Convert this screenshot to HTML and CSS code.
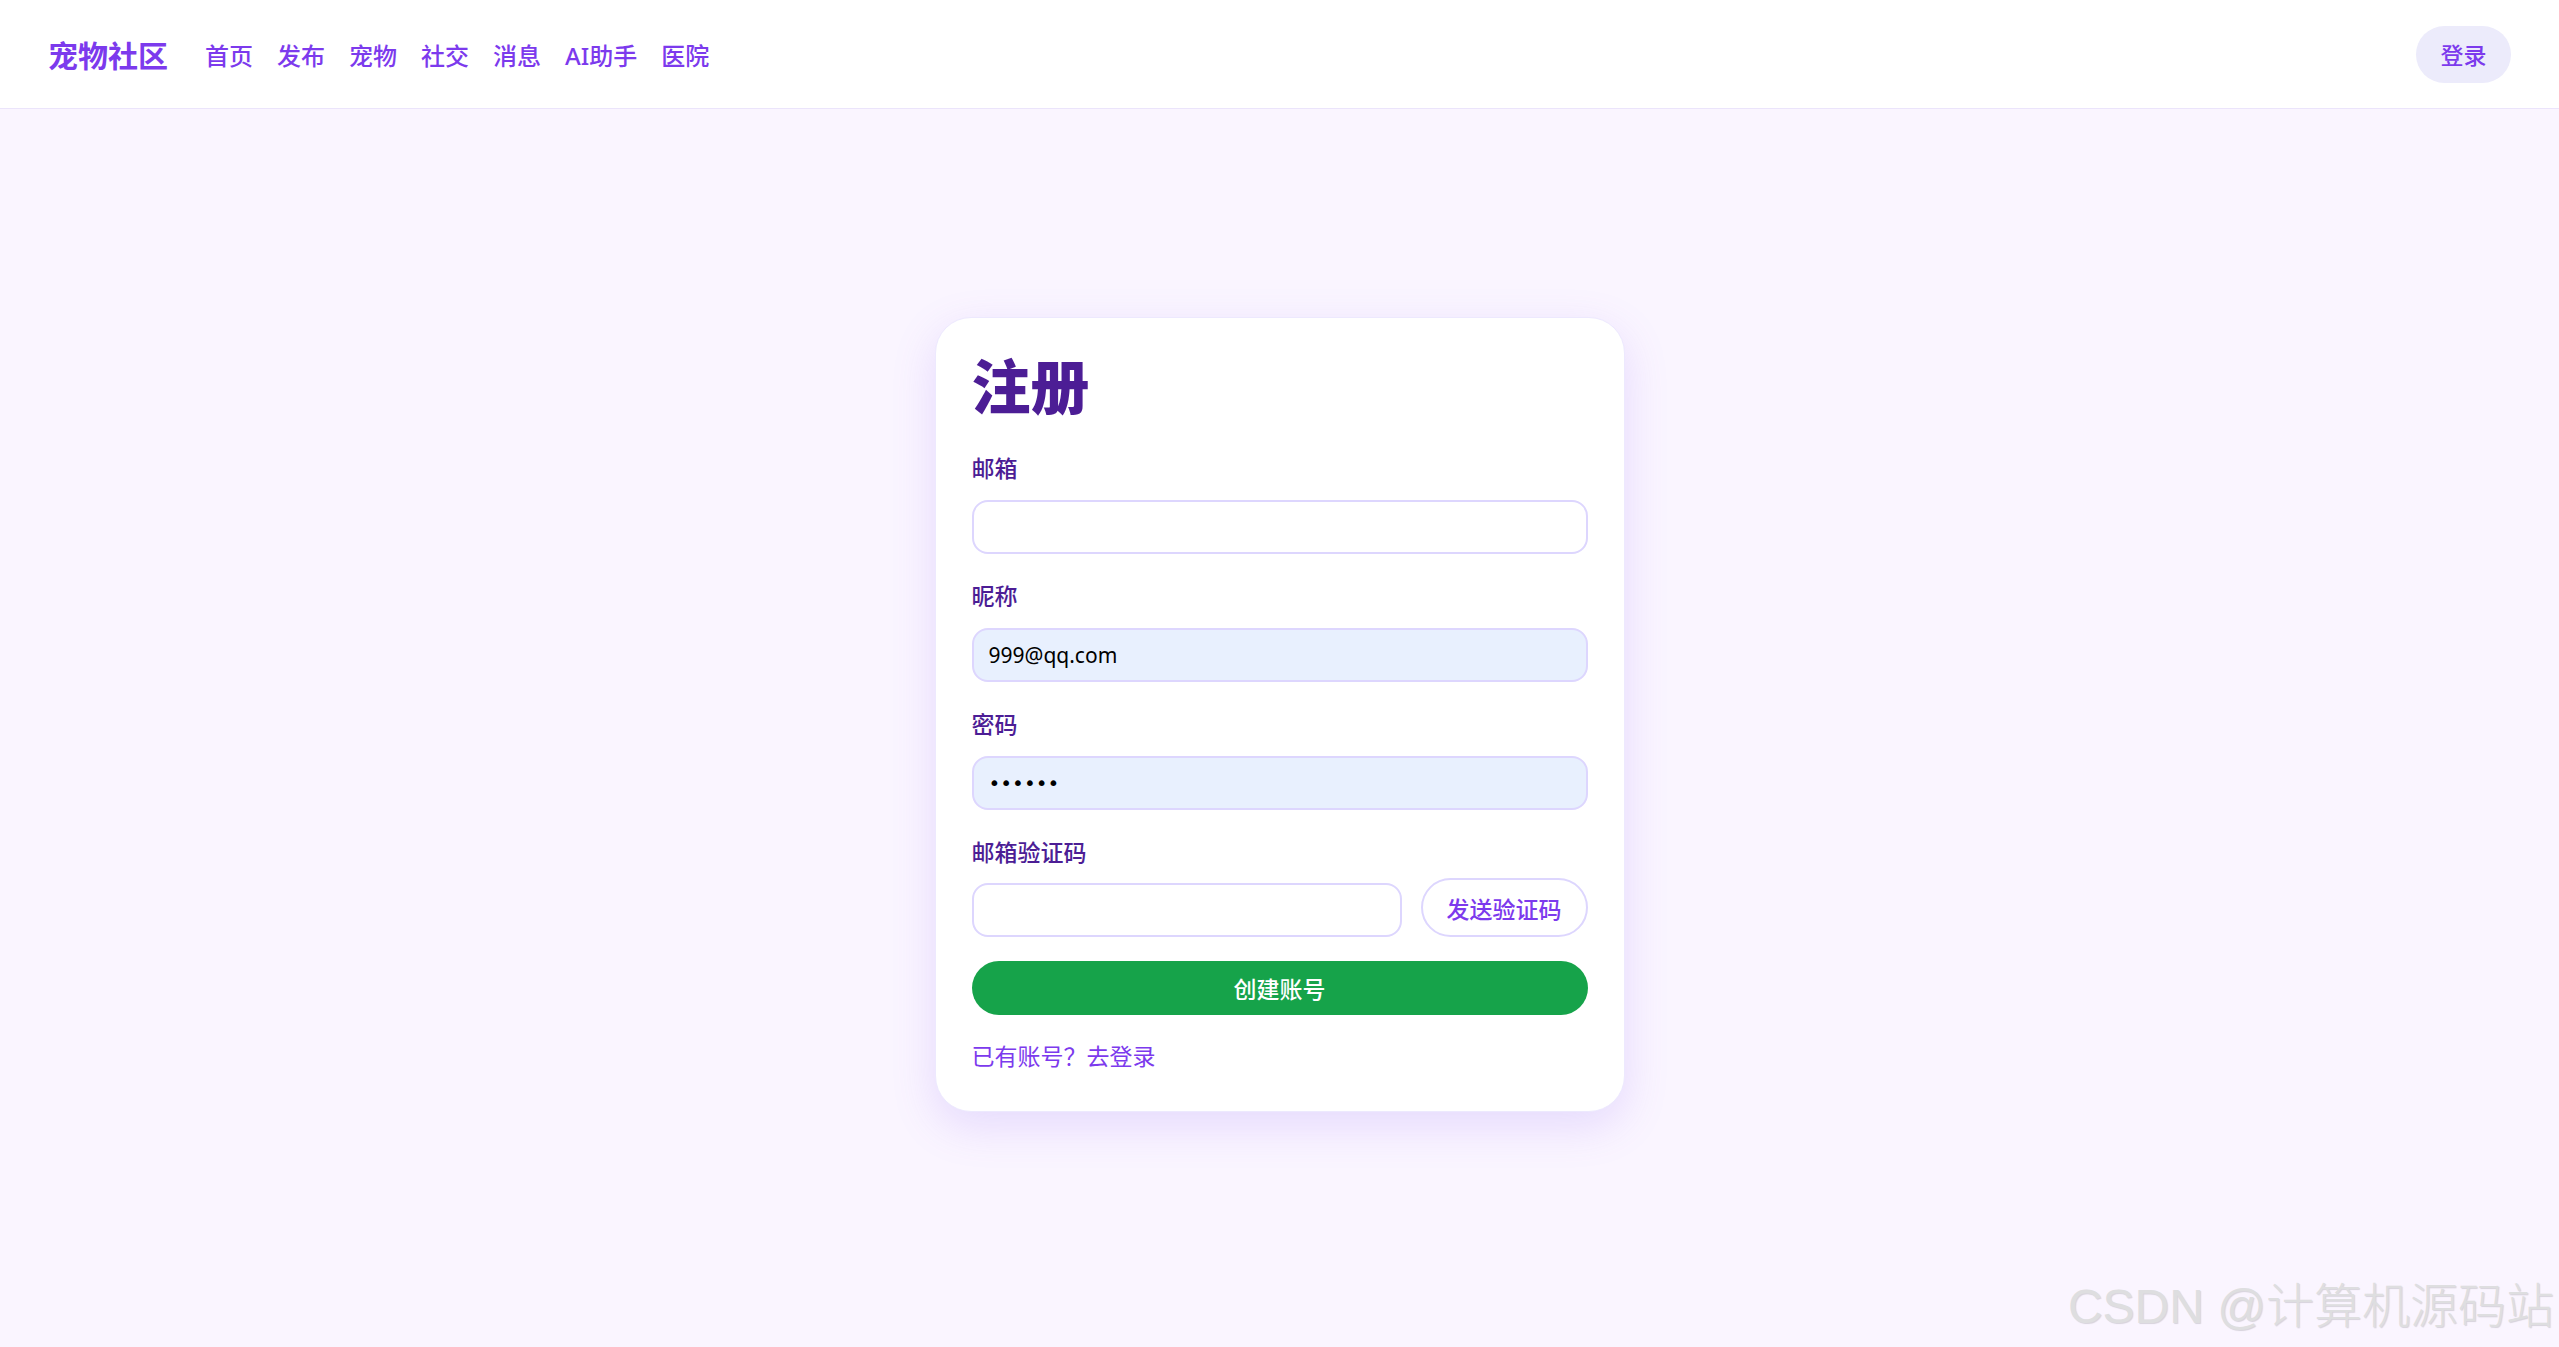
FILE: index.html
```html
<!DOCTYPE html>
<html lang="zh-CN">
<head>
    <meta charset="UTF-8">
    <meta name="viewport" content="width=device-width, initial-scale=1.0">
    <title>宠物社区 - 注册</title>
    <link rel="stylesheet" href="styles.css">
</head>
<body>
    <header class="topbar">
        <div class="topbar_left">
            <a class="logo" href="#">宠物社区</a>
            <nav class="nav">
                <a href="#">首页</a>
                <a href="#">发布</a>
                <a href="#">宠物</a>
                <a href="#">社交</a>
                <a href="#">消息</a>
                <a href="#">AI助手</a>
                <a href="#">医院</a>
            </nav>
        </div>
        <button class="login_btn">登录</button>
    </header>

    <main class="page">
        <form class="card" onsubmit="return false">
            <h1>注册</h1>

            <div class="field">
                <label>邮箱</label>
                <input class="input" type="text">
            </div>
            <div class="field">
                <label>昵称</label>
                <input class="input filled" type="text" value="999@qq.com">
            </div>
            <div class="field">
                <label>密码</label>
                <input class="input filled pwd" type="password" value="123456">
            </div>
            <div class="field code_field">
                <label>邮箱验证码</label>
                <div class="code_row">
                    <input class="input" type="text">
                    <button class="send_btn" type="button">发送验证码</button>
                </div>
            </div>

            <button class="submit_btn" type="submit">创建账号</button>
            <a class="switch_link" href="#">已有账号？去登录</a>
        </form>
    </main>

    <div class="watermark">CSDN @计算机源码站</div>
</body>
</html>
```

FILE: styles.css
```css
body{
    margin: 0;
    min-height: 100vh;
    background-color: #faf5ff;
    font-family: "Noto Sans", "Noto Sans CJK SC", sans-serif;
    position: relative;
}
a{
    text-decoration: none;
}

/* top bar */
.topbar{
    display: flex;
    align-items: center;
    justify-content: space-between;
    height: 108px;
    padding: 0 48px;
    background-color: #fff;
    border-bottom: 1px solid #ebe4fb;
}
.topbar_left{
    display: flex;
    align-items: center;
}
.logo{
    font-size: 30px;
    font-weight: 700;
    color: #7c3aed;
}
.nav{
    display: flex;
    gap: 24px;
    margin-left: 37px;
}
.nav a{
    font-size: 24px;
    font-weight: 500;
    color: #7c3aed;
}
.login_btn{
    width: 95px;
    height: 57px;
    border: none;
    border-radius: 999px;
    background-color: #ecebfb;
    color: #7c3aed;
    font-family: inherit;
    font-size: 23px;
    font-weight: 500;
    cursor: pointer;
}

/* register card */
.page{
    display: flex;
    justify-content: center;
    padding-top: 208px;
}
.card{
    box-sizing: border-box;
    width: 690px;
    display: flex;
    flex-direction: column;
    padding: 34px 36px 40px;
    background-color: #fff;
    border: 1px solid #ede9fe;
    border-radius: 36px;
    box-shadow: 0 14px 44px rgba(139, 92, 246, 0.18);
}
.card h1{
    margin: 0 0 32px;
    font-size: 59px;
    line-height: 69px;
    font-weight: 800;
    color: #4c1d95;
}
.field{
    display: flex;
    flex-direction: column;
    gap: 17px;
    margin-bottom: 27px;
}
.field label{
    font-size: 23px;
    line-height: 30px;
    font-weight: 500;
    color: #4c1d95;
}
.input{
    box-sizing: border-box;
    height: 54px;
    padding: 0 15px;
    border: 2px solid #ddd6fe;
    border-radius: 16px;
    background-color: #fff;
    font-family: inherit;
    font-size: 21px;
    color: #000;
    outline: none;
}
.input.filled{
    background-color: #e8f0fe;
}
.input.pwd{
    font-family: "DejaVu Sans", sans-serif;
    font-size: 20px;
}
.code_field{
    gap: 11px;
    margin-bottom: 24px;
}
.code_row{
    display: flex;
    align-items: flex-end;
    gap: 19px;
}
.code_row .input{
    flex: 1;
    min-width: 0;
}
.send_btn{
    box-sizing: border-box;
    height: 59px;
    padding: 0 24px;
    border: 2px solid #ddd6fe;
    border-radius: 999px;
    background-color: #fff;
    color: #7c3aed;
    font-family: inherit;
    font-size: 23px;
    font-weight: 500;
    cursor: pointer;
}
.submit_btn{
    height: 54px;
    border: none;
    border-radius: 999px;
    background-color: #16a34a;
    color: #fff;
    font-family: inherit;
    font-size: 23px;
    font-weight: 500;
    cursor: pointer;
}
.switch_link{
    margin-top: 26px;
    font-size: 23px;
    line-height: 30px;
    color: #7c3aed;
}

/* corner mark */
.watermark{
    position: absolute;
    right: 5px;
    bottom: 16px;
    font-family: "Liberation Sans", "Noto Sans CJK SC", sans-serif;
    font-size: 48px;
    font-weight: 300;
    line-height: 1;
    color: #dedee0;
    text-shadow: 1px 1px 1px rgba(0, 0, 0, 0.14);
    pointer-events: none;
}
```
